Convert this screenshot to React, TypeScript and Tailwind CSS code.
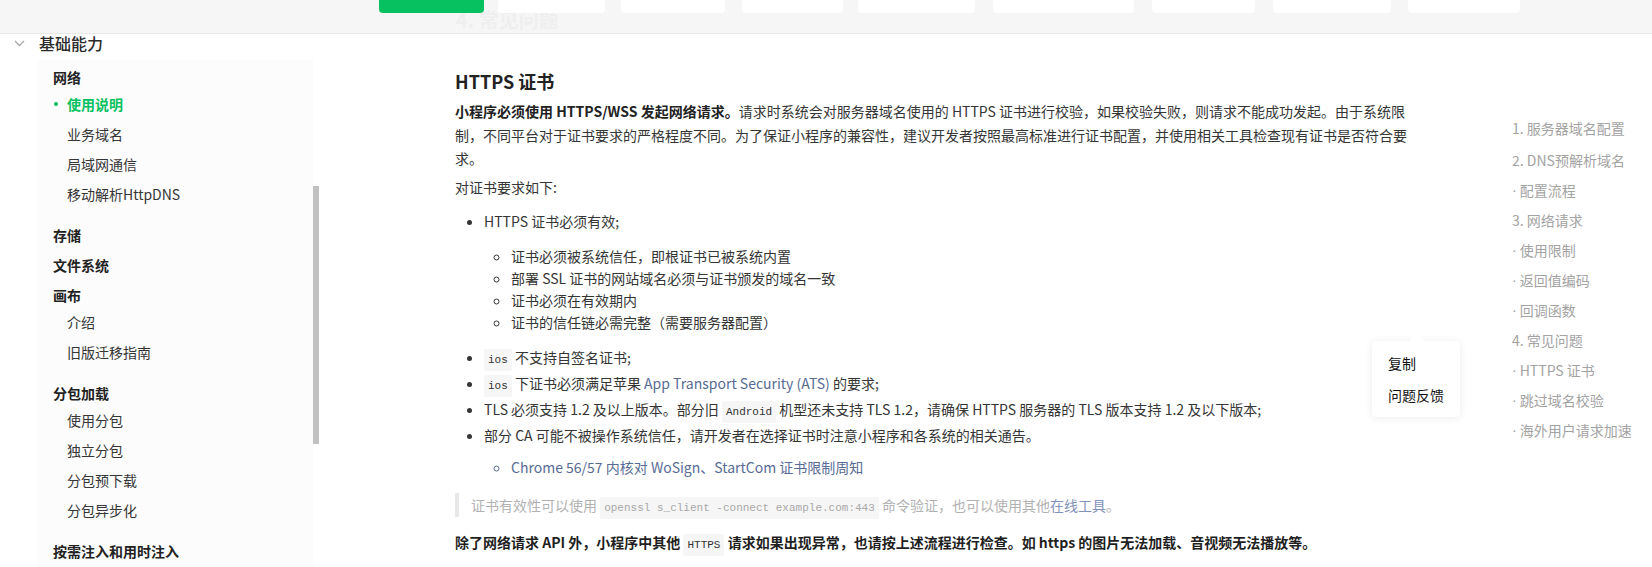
import React from "react";

const tabs = [
  "w-[105px] bg-[#07c160]",
  "ml-[14px] w-[107px] bg-white",
  "ml-[16px] w-[104px] bg-white",
  "ml-[17px] w-[101px] bg-white",
  "ml-[15px] w-[117px] bg-white",
  "ml-[18px] w-[141px] bg-white",
  "ml-[18px] w-[103px] bg-white",
  "ml-[18px] w-[118px] bg-white",
  "ml-[17px] w-[112px] bg-white",
];

type Group = { title: string; items?: string[]; active?: string };

const groups: Group[] = [
  { title: "网络", items: ["使用说明", "业务域名", "局域网通信", "移动解析HttpDNS"], active: "使用说明" },
  { title: "存储" },
  { title: "文件系统" },
  { title: "画布", items: ["介绍", "旧版迁移指南"] },
  { title: "分包加载", items: ["使用分包", "独立分包", "分包预下载", "分包异步化"] },
  { title: "按需注入和用时注入" },
];

// sub: true -> rendered with a leading middle dot
const toc: { text: string; sub?: boolean }[] = [
  { text: "1. 服务器域名配置" },
  { text: "2. DNS预解析域名" },
  { text: "配置流程", sub: true },
  { text: "3. 网络请求" },
  { text: "使用限制", sub: true },
  { text: "返回值编码", sub: true },
  { text: "回调函数", sub: true },
  { text: "4. 常见问题" },
  { text: "HTTPS 证书", sub: true },
  { text: "跳过域名校验", sub: true },
  { text: "海外用户请求加速", sub: true },
];

function Code({ children, faded }: { children: React.ReactNode; faded?: boolean }) {
  return (
    <code
      className={`inline-block rounded-[2px] bg-[#f6f6f6] px-[4px] font-[family-name:'Liberation_Mono',monospace] text-[11px] font-normal leading-[22px] ${
        faded ? "text-[#a8a8a8]" : "text-[#333]"
      }`}
    >
      {children}
    </code>
  );
}

function Sidebar() {
  return (
    <aside className="relative w-[319px] shrink-0">
      <div className="flex h-[26px] items-start">
        <svg className="ml-[14px] mt-[6px]" width="11" height="7" viewBox="0 0 11 7" fill="none">
          <path d="M1 1l4.5 4.5L10 1" stroke="#a9a9a9" strokeWidth="1.3" />
        </svg>
        <span className="ml-[14px] text-[16px] leading-[18px] font-medium text-[#2b2b2b]">基础能力</span>
      </div>
      <div className="ml-[37px] h-[600px] w-[276px] bg-[#fcfcfc] pt-[2px]">
        {groups.map((g) => (
          <div key={g.title} className={g.items ? "mb-[11px]" : ""}>
            <div className="flex h-[30px] items-center pl-[16px] text-[14px] font-bold text-[#222]">{g.title}</div>
            {g.items && (
              <ul className="-mt-[3px]">
                {g.items.map((it) =>
                  it === g.active ? (
                    <li key={it} className="flex h-[30px] items-center text-[14px] font-bold text-[#07c160]">
                      <span className="ml-[17px] mr-[9px] h-[4px] w-[4px] rounded-full bg-[#07c160]" />
                      {it}
                    </li>
                  ) : (
                    <li key={it} className="flex h-[30px] items-center pl-[30px] text-[14px] text-[#353535]">
                      {it}
                    </li>
                  )
                )}
              </ul>
            )}
          </div>
        ))}
      </div>
      {/* scrollbar thumb */}
      <div className="absolute left-[313px] top-[152px] h-[258px] w-[6px] bg-[#c1c1c1]" />
    </aside>
  );
}

function Article() {
  return (
    <article className="ml-[136px] w-[966px] shrink-0 pt-[35px] text-[14px] text-[#353535]">
      <h3 className="text-[18px] font-bold leading-[24px] text-[#222]">HTTPS 证书</h3>
      <p className="mt-[7px] leading-[23.5px]">
        <strong className="text-[#222]">小程序必须使用 HTTPS/WSS 发起网络请求。</strong>
        请求时系统会对服务器域名使用的 HTTPS 证书进行校验，如果校验失败，则请求不能成功发起。由于系统限
        <br />
        制，不同平台对于证书要求的严格程度不同。为了保证小程序的兼容性，建议开发者按照最高标准进行证书配置，并使用相关工具检查现有证书是否符合要
        <br />
        求。
      </p>
      <p className="mt-[4px] leading-[24px]">对证书要求如下:</p>
      <ul className="mt-[10px] list-disc pl-[29px] leading-[24px]">
        <li>
          HTTPS 证书必须有效;
          <ul className="my-[12px] list-[circle] pl-[27px] leading-[22px]">
            <li>证书必须被系统信任，即根证书已被系统内置</li>
            <li>部署 SSL 证书的网站域名必须与证书颁发的域名一致</li>
            <li>证书必须在有效期内</li>
            <li>证书的信任链必需完整（需要服务器配置）</li>
          </ul>
        </li>
        <li>
          <Code>ios</Code> 不支持自签名证书;
        </li>
        <li>
          <Code>ios</Code> 下证书必须满足苹果 <span className="text-[#576b95]">App Transport Security (ATS)</span> 的要求;
        </li>
        <li>
          TLS 必须支持 1.2 及以上版本。部分旧 <Code>Android</Code> 机型还未支持 TLS 1.2，请确保 HTTPS 服务器的 TLS 版本支持 1.2 及以下版本;
        </li>
        <li>
          部分 CA 可能不被操作系统信任，请开发者在选择证书时注意小程序和各系统的相关通告。
          <ul className="mt-[9px] list-[circle] pl-[27px] leading-[22px]">
            <li className="text-[#576b95]">Chrome 56/57 内核对 WoSign、StartCom 证书限制周知</li>
          </ul>
        </li>
      </ul>
      <blockquote className="mt-[15px] h-[24px] border-l-[4px] border-[#e8e8e8] pl-[12px] leading-[24px] text-[#b2b2b2]">
        证书有效性可以使用 <Code faded>openssl s_client -connect example.com:443</Code> 命令验证，也可以使用其他
        <span className="text-[#8292b8]">在线工具</span>。
      </blockquote>
      <p className="mt-[13px] font-bold leading-[24px] text-[#1f1f1f]">
        除了网络请求 API 外，小程序中其他 <Code>HTTPS</Code> 请求如果出现异常，也请按上述流程进行检查。如 https 的图片无法加载、音视频无法播放等。
      </p>
    </article>
  );
}

function Toc() {
  return (
    <nav className="ml-[91px] pt-[79px] text-[14px] text-[#a3a3a3]">
      {toc.map((t, i) => (
        <div key={t.text} className={`flex h-[30px] items-center whitespace-nowrap ${i === 0 ? "mb-[2px]" : ""}`}>
          {t.sub && <span className="mr-[3px] font-[family-name:'Liberation_Sans',sans-serif]">·</span>}
          {t.text}
        </div>
      ))}
    </nav>
  );
}

export default function App() {
  return (
    <div className="relative h-[567px] w-[1652px] overflow-hidden bg-white font-[family-name:'Noto_Sans_CJK_SC',sans-serif]">
      <header className="relative flex h-[34px] items-start overflow-hidden border-b border-[#e8e8e8] bg-[#f6f6f6] pl-[379px]">
        <div className="absolute left-[456px] top-[8px] text-[20px] font-bold leading-[24px] text-[#efefef]">4. 常见问题</div>
        {tabs.map((c, i) => (
          <div key={i} className={`relative h-[13px] rounded-b-[4px] ${c}`} />
        ))}
      </header>
      <div className="flex">
        <Sidebar />
        <Article />
        <Toc />
      </div>
      {/* context menu */}
      <div className="absolute left-[1372px] top-[341px] w-[88px] rounded-[4px] bg-white py-[6px] text-[14px] text-[#111] shadow-[0_1px_8px_rgba(0,0,0,0.08)]">
        <div className="absolute -top-[5px] left-[40px] h-[10px] w-[10px] rotate-45 bg-white" />
        <div className="relative flex h-[32px] items-center pl-[16px]">复制</div>
        <div className="relative flex h-[32px] items-center pl-[16px]">问题反馈</div>
      </div>
    </div>
  );
}
